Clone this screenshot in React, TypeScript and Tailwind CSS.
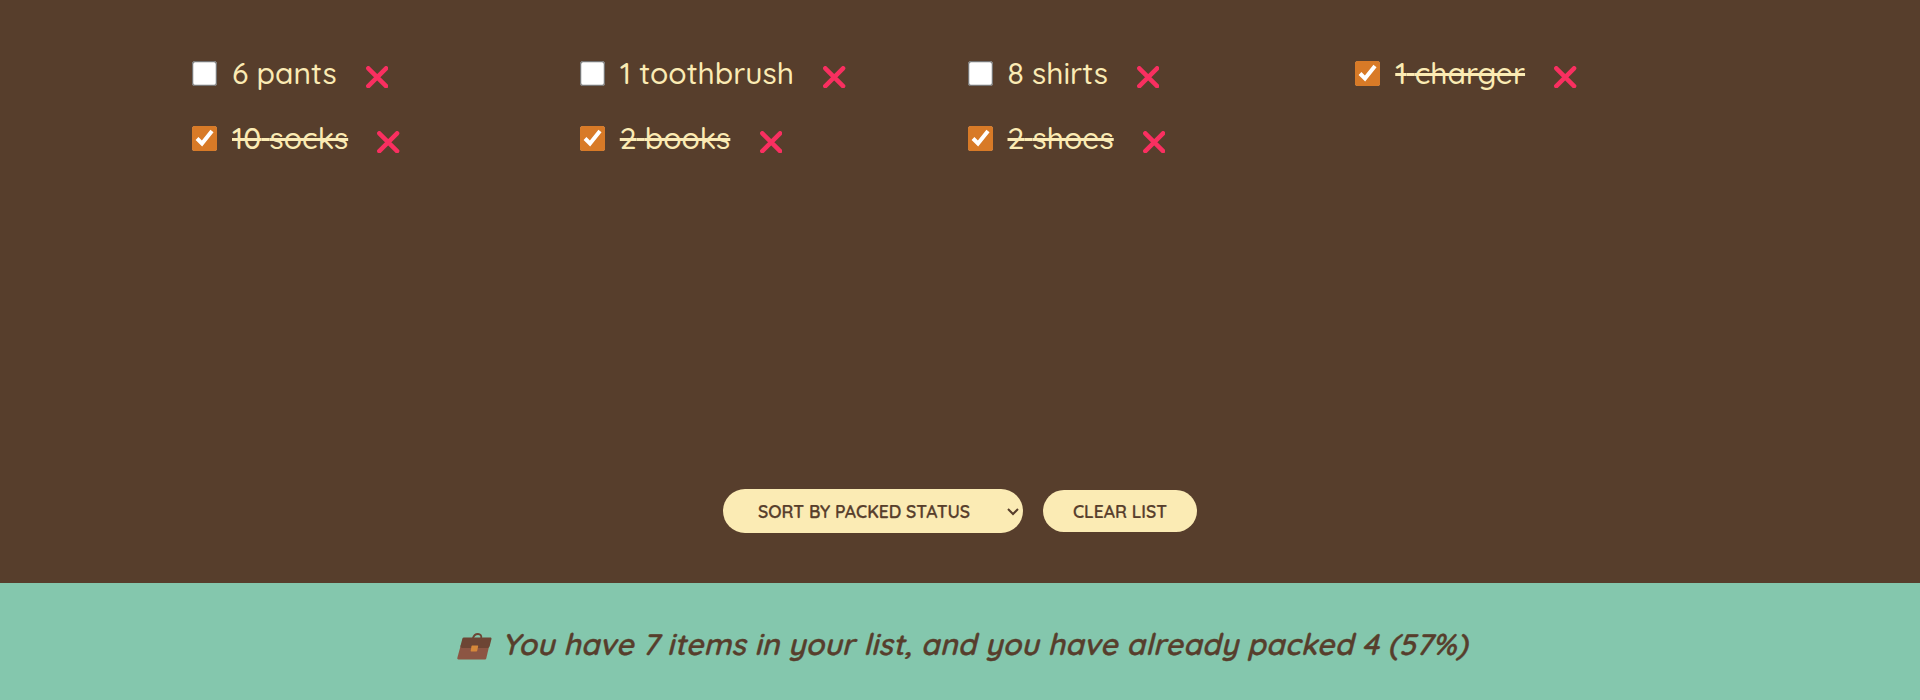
import { useState } from "react";

type Item = { id: number; quantity: number; description: string; packed: boolean };

const initialItems: Item[] = [
  { id: 1, quantity: 6, description: "pants", packed: false },
  { id: 2, quantity: 1, description: "toothbrush", packed: false },
  { id: 3, quantity: 8, description: "shirts", packed: false },
  { id: 4, quantity: 1, description: "charger", packed: true },
  { id: 5, quantity: 10, description: "socks", packed: true },
  { id: 6, quantity: 2, description: "books", packed: true },
  { id: 7, quantity: 2, description: "shoes", packed: true },
];

function CrossIcon() {
  return (
    <svg viewBox="0 0 22.4 22.4" className="block size-[22.4px]" aria-hidden="true">
      <path d="M2.3 2.3 20.1 20.1M20.1 2.3 2.3 20.1" stroke="#f92f60" strokeWidth="4.5" strokeLinecap="round" />
    </svg>
  );
}

function BriefcaseIcon() {
  return (
    <svg viewBox="0 0 35 27" className="block h-[27px] w-[35px]" aria-hidden="true">
      <path d="M15.8 5.5C16.7 2.2 18.7 1 21 1s3.8 1.6 3.2 4.5" fill="none" stroke="#6d4534" strokeWidth="1.8" />
      <path d="M3.8 12h28.6l-3.1 13.2c-.2.8-.8 1.3-1.6 1.3H1.4c-.8 0-1.3-.6-1.1-1.4z" fill="#8c5543" />
      <path d="M6.9 4.4h26.4c.9 0 1.4.6 1.2 1.5l-1.8 7.2c-.3 1.2-1.2 1.9-2.4 1.9H5.6c-1.6 0-2.4-1-2-2.5l1.8-6.9c.2-.8.7-1.2 1.5-1.2z" fill="#6d4534" />
      <path d="M15.2 12.4h5.4c.5 0 .7.3.6.7l-1 4.6c-.1.4-.4.7-.8.7h-5.1c-.5 0-.7-.3-.6-.7l.8-4.6c.1-.4.3-.7.7-.7z" fill="#d6883a" />
    </svg>
  );
}

export default function App() {
  const [items, setItems] = useState(initialItems);
  const [sortBy, setSortBy] = useState("packed");

  const sorted = [...items].sort((a, b) => {
    if (sortBy === "description") return a.description.localeCompare(b.description);
    if (sortBy === "packed") return Number(a.packed) - Number(b.packed);
    return a.id - b.id;
  });
  const packed = items.filter((item) => item.packed).length;
  const percent = items.length ? Math.round((packed / items.length) * 100) : 0;

  const toggle = (id: number) =>
    setItems(items.map((item) => (item.id === id ? { ...item, packed: !item.packed } : item)));

  return (
    <div className="flex h-[700px] flex-col font-[Quicksand,Lato,sans-serif] text-[30px] font-medium text-[#573e2c]">
      <main className="flex flex-1 flex-col items-center justify-between bg-[#573e2c] pt-[51px] pb-[50px]">
        <ul className="grid w-4/5 grid-cols-4 gap-x-[15px] gap-y-5 text-[#fbebb4]">
          {sorted.map((item) => (
            <li key={item.id} className="flex h-[45px] items-center">
              <input
                type="checkbox"
                checked={item.packed}
                onChange={() => toggle(item.id)}
                className="mr-3 size-5 accent-[#d87a27] [zoom:1.25]"
              />
              <span className={item.packed ? "line-through decoration-[3px]" : ""}>
                {item.quantity} {item.description}
              </span>
              <button
                aria-label="Remove"
                className="mt-[7px] ml-[29.2px]"
                onClick={() => setItems(items.filter(({ id }) => id !== item.id))}
              >
                <CrossIcon />
              </button>
            </li>
          ))}
        </ul>
        <div className="flex items-center gap-5 text-[17.5px] font-semibold [-webkit-text-stroke:0.2px_#573e2c]">
          <select
            value={sortBy}
            onChange={(event) => setSortBy(event.target.value)}
            className="h-[35.2px] w-60 rounded-full bg-[#fbebb4] px-6 text-sm font-semibold uppercase [zoom:1.25]"
          >
            <option value="input">Sort by input order</option>
            <option value="description">Sort by description</option>
            <option value="packed">Sort by packed status</option>
          </select>
          <button className="h-[42px] w-[154px] rounded-full bg-[#fbebb4] uppercase" onClick={() => setItems([])}>
            Clear list
          </button>
        </div>
      </main>
      <footer className="flex h-[117px] items-center justify-center bg-[#84c7ad] pt-[5px] pl-[5px] font-semibold tracking-[0.22px] italic [-webkit-text-stroke:0.35px_#573e2c]">
        <span className="mt-[5px] mr-[9.5px]">
          <BriefcaseIcon />
        </span>
        <span>
          You have {items.length} items in your list, and you have already packed {packed} ({percent}%)
        </span>
      </footer>
    </div>
  );
}
